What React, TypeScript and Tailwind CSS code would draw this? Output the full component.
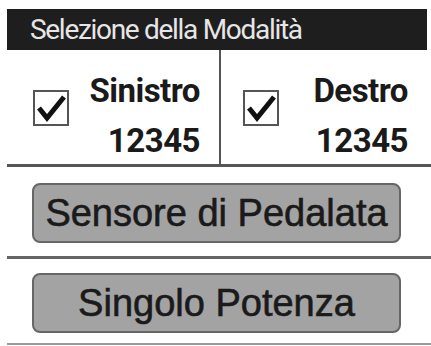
const Check = () => (
  <svg width="36" height="36" viewBox="0 0 36 36" className="shrink-0">
    <rect x="1" y="1" width="34" height="34" fill="white" stroke="#555" strokeWidth="2" />
    <path d="M6 18 L14 28 L31 7" fill="none" stroke="#111" strokeWidth="5" strokeLinejoin="miter" />
  </svg>
);

const Cell = ({ label, value, className }: { label: string; value: string; className: string }) => (
  <div className={`flex items-center ${className}`}>
    <div className="mt-[2px]">
      <Check />
    </div>
    <div className="ml-auto mt-[18px] flex flex-col items-end font-['Roboto',sans-serif] font-bold text-[33px] leading-[50px] text-[#1a1a1a] tracking-[-0.5px]">
      <span>{label}</span>
      <span>{value}</span>
    </div>
  </div>
);

export default function App() {
  return (
    <div className="w-[431px] h-[346px] bg-white pt-[9px] pl-[7px] overflow-hidden">
      {/* title bar */}
      <div className="w-[420px] h-[41px] bg-[#1e1e1e] flex items-center pl-[23px]">
        <span className="font-['Roboto',sans-serif] text-[28px] text-[#e6e6e6] tracking-[-1.3px]">
          Selezione della Modalità
        </span>
      </div>

      {/* left / right */}
      <div className="flex h-[114px]">
        <Cell label="Sinistro" value="12345" className="w-[214px] border-r-2 border-[#555] pl-[26px] pr-[19px]" />
        <Cell label="Destro" value="12345" className="flex-1 pl-[22px] pr-[23px]" />
      </div>
      <div className="h-[3px] bg-[#555]" />

      {/* buttons */}
      <div className="pt-[16px] pb-[13px] pl-[25px]">
        <button className="w-[369px] h-[60px] bg-[#a3a3a3] border-2 border-[#666] rounded-[8px] font-['Liberation_Sans',sans-serif] text-[38px] text-[#1a1a1a] [-webkit-text-stroke:0.6px_#1a1a1a]">
          Sensore di Pedalata
        </button>
      </div>
      <div className="h-[3px] bg-[#666]" />
      <div className="pt-[14px] pb-[10px] pl-[25px]">
        <button className="w-[369px] h-[60px] bg-[#a3a3a3] border-2 border-[#666] rounded-[8px] font-['Liberation_Sans',sans-serif] text-[38px] text-[#1a1a1a] [-webkit-text-stroke:0.6px_#1a1a1a]">
          Singolo Potenza
        </button>
      </div>
      <div className="h-[2px] bg-[#999]" />
    </div>
  );
}
